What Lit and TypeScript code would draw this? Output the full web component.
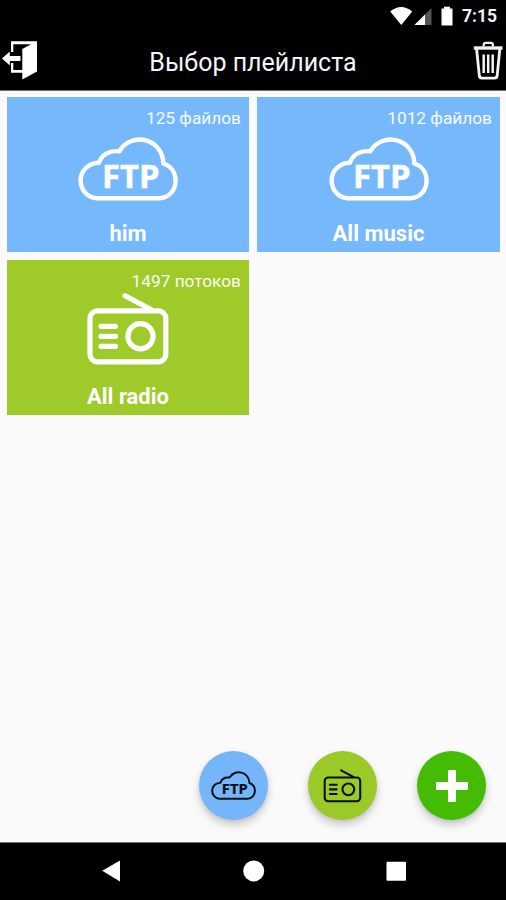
import { LitElement, html, css, svg, nothing } from "lit";
import { customElement, property } from "lit/decorators.js";

type Kind = "ftp" | "radio";

interface Playlist {
  kind: Kind;
  name: string;
  count: string;
}

const playlists: Playlist[] = [
  { kind: "ftp", name: "him", count: "125 файлов" },
  { kind: "ftp", name: "All music", count: "1012 файлов" },
  { kind: "radio", name: "All radio", count: "1497 потоков" },
];

@customElement("source-icon")
class SourceIcon extends LitElement {
  @property() kind: Kind = "ftp";
  @property({ type: Boolean }) thin = false;

  static styles = css`
    :host { display: block; }
    svg { display: block; width: 100%; height: 100%; overflow: visible; }
    .line { fill: none; stroke: currentColor; stroke-width: 4.4; stroke-linecap: round; stroke-linejoin: round; }
    .heavy { stroke-width: 5.2; }
    .thin { stroke-width: 4.4; }
    text { fill: currentColor; stroke: currentColor; stroke-width: .5; font: 700 32px "Open Sans", "Noto Sans", sans-serif; }
  `;

  render() {
    const weight = this.thin ? "thin" : "";
    const cloud = svg`
      <path class="line ${weight}" d="M18.500 61.200C9 60.500 2.600 52.500 2.600 43.500C2.600 33.500 10.500 26 21 25.700C23.500 18 31 13 41.300 14.300A23.600 23.600 0 0 1 85.300 26.500C93 29 97.600 35.500 97.600 43.500C97.600 53.500 90.500 61.200 81.500 61.200Z"/>
      <text x="24" y="51" textLength="57.500" lengthAdjust="spacingAndGlyphs">FTP</text>`;
    const radio = svg`
      <rect class="line heavy ${weight}" x="12" y="15.800" width="75.800" height="51" rx="7.500"/>
      <path class="line heavy ${weight}" d="M47 .8L73 14.500"/>
      <path class="line heavy ${weight}" d="M23 31.300H37.500M23 41.300H37.500M23 51.300H37.500"/>
      <circle class="line heavy ${weight}" cx="62.500" cy="41.300" r="12.600"/>`;
    return html`<svg viewBox="0 0 100 64">${this.kind === "ftp" ? cloud : radio}</svg>`;
  }
}

@customElement("playlist-card")
class PlaylistCard extends LitElement {
  @property({ attribute: false }) item?: Playlist;

  static styles = css`
    :host { display: block; }
    .card {
      box-sizing: border-box; height: 100%; padding: 11px 8px 0;
      display: flex; flex-direction: column; align-items: center;
      color: #fff; font-family: Roboto, sans-serif;
    }
    .ftp { background: #75b9fc; }
    .radio { background: #9fcb2a; }
    .count { align-self: flex-end; height: 20px; font-size: 17.300px; line-height: 21px; opacity: .94; white-space: nowrap; }
    .icon { width: 100px; height: 64px; margin-top: 9px; }
    .radio .icon { margin-top: 4px; margin-bottom: 5px; }
    .name { margin-top: 20px; font-size: 22px; line-height: 26px; font-weight: 700; }
  `;

  render() {
    if (!this.item) return nothing;
    const { kind, name, count } = this.item;
    return html`
      <div class="card ${kind}">
        <div class="count">${count}</div>
        <source-icon class="icon" .kind=${kind}></source-icon>
        <div class="name">${name}</div>
      </div>`;
  }
}

@customElement("app-root")
class AppRoot extends LitElement {
  static styles = css`
    :host {
      display: flex; flex-direction: column; position: relative;
      width: 506px; height: 900px; overflow: hidden;
      background: #fafafa; font-family: Roboto, sans-serif;
    }
    svg { display: block; }
    .status {
      flex: none; box-sizing: border-box; height: 31px; padding: 1px 9px 0 0; background: #000; color: #fff;
      display: flex; justify-content: flex-end; align-items: center;
    }
    .clock { width: 35px; font-size: 17.500px; font-weight: 700; line-height: 20px; opacity: .95; white-space: nowrap; }
    .signals { margin-right: 8px; }
    .bar {
      flex: none; box-sizing: border-box; height: 60px; background: #000; color: #f6f6f6;
      display: grid; grid-template-columns: 42px 1fr 42px; align-items: center;
      border-bottom: 1px solid #707070;
    }
    .title { text-align: center; font-size: 25px; line-height: 32px; padding-top: 4px; white-space: nowrap; }
    .trash { justify-self: end; }
    .grid {
      flex: 1; display: grid; grid-template-columns: 242px 243px; grid-auto-rows: 155px;
      gap: 8px; padding: 6px 6px 0 7px; align-content: start;
    }
    .nav {
      flex: none; box-sizing: border-box; height: 58px; background: #000; border-top: 1px solid #777;
      display: flex; justify-content: center;
    }
    .actions {
      position: absolute; right: 20px; bottom: 80px;
      display: flex; gap: 40px;
    }
    .fab {
      width: 69px; height: 69px; border-radius: 50%;
      display: flex; align-items: center; justify-content: center; color: #071018;
      box-shadow: 0 5px 8px rgba(0, 0, 0, .2), 0 1px 3px rgba(0, 0, 0, .08);
    }
    .fab.ftp { background: #75b6fa; }
    .fab.radio { background: #9bca28; }
    .fab.add { background: #45bc04; }
    .mini { width: 45px; height: 29px; }
    .radio .mini { width: 47px; height: 30px; margin-bottom: 2px; }
  `;

  render() {
    return html`
      <div class="status">
        <svg class="signals" width="64" height="20" viewBox="391 5 64 20" fill="#fff">
          <path d="M391.200 10.500Q402.200 1.500 413.200 10.500L402.300 24Z"/>
          <path d="M415.500 24L432.500 7V24Z" fill="#555"/>
          <path d="M415.500 24L426 13.500V24Z"/>
          <path d="M442.500 7.500H445V5.800H451V7.500H453.500V24.500H442.500Z"/>
        </svg>
        <div class="clock">7:15</div>
      </div>
      <div class="bar">
        <svg width="42" height="59" viewBox="0 31 42 59" fill="#fff">
          <path d="M11 52V41.200H37V71.500L22.300 79.500V72.700H11V63H13.300V70H22.300V49L31 44.200H13.300V52Z"/>
          <path d="M2 58.500L9.800 51.500V56H20.500V61H9.800V65.500Z"/>
        </svg>
        <div class="title">Выбор плейлиста</div>
        <svg class="trash" width="42" height="59" viewBox="464 31 42 59" fill="none" stroke="#f2f2f2">
          <path d="M483.700 46.500V44.800Q483.700 42.900 485.600 42.900H491Q492.900 42.900 492.900 44.800V46.500" stroke-width="2.200"/>
          <path d="M473.800 48H502.500" stroke-width="3.400"/>
          <path d="M476.600 49L479.300 75.500Q479.600 78.100 482 78.100H494.500Q496.900 78.100 497.200 75.500L499.800 49" stroke-width="2.800"/>
          <path d="M483.700 54.500V73M488.200 54.500V73M492.700 54.500V73" stroke-width="2.500"/>
        </svg>
      </div>
      <div class="grid">
        ${playlists.map((p) => html`<playlist-card .item=${p}></playlist-card>`)}
      </div>
      <div class="nav">
        <svg width="506" height="57" viewBox="0 843 506 57" fill="#fff">
          <path d="M102.200 870.800L120 860.500V881.500Z"/>
          <circle cx="253.700" cy="870.900" r="10.500"/>
          <rect x="386.500" y="861.800" width="19.500" height="19" rx="1"/>
        </svg>
      </div>
      <div class="actions">
        <div class="fab ftp"><source-icon class="mini" kind="ftp" thin></source-icon></div>
        <div class="fab radio"><source-icon class="mini" kind="radio" thin></source-icon></div>
        <div class="fab add">
          <svg width="34" height="34" viewBox="0 0 34 34" fill="#fff">
            <path d="M14 1H20Q21 1 21 2V13H32Q33 13 33 14V20Q33 21 32 21H21V32Q21 33 20 33H14Q13 33 13 32V21H2Q1 21 1 20V14Q1 13 2 13H13V2Q13 1 14 1Z"/>
          </svg>
        </div>
      </div>`;
  }
}
